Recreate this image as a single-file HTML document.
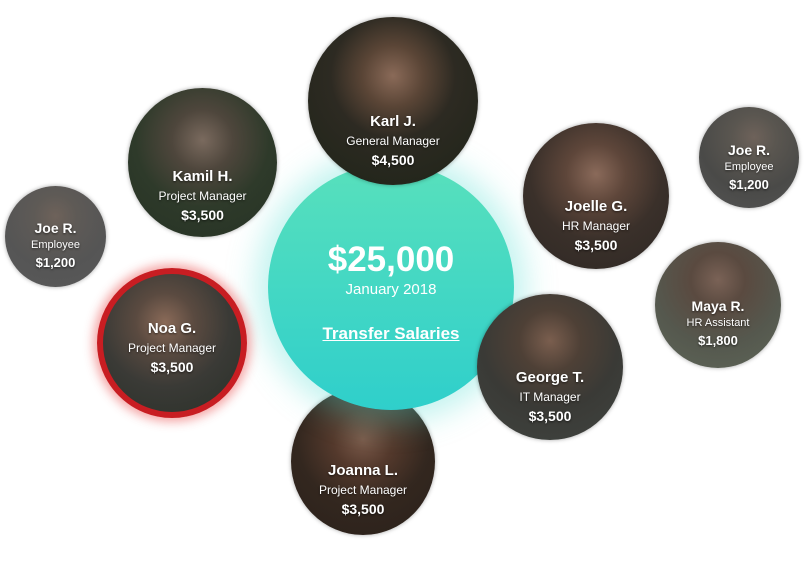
<!DOCTYPE html>
<html><head><meta charset="utf-8"><style>
body{margin:0;width:812px;height:565px;background:#fff;position:relative;overflow:hidden;font-family:"Liberation Sans",sans-serif;}
.c{position:absolute;border-radius:50%;overflow:hidden;box-shadow:0 0 4px rgba(0,0,0,.35);color:#fff;text-align:center;z-index:2;}
.c .t{position:absolute;left:0;right:0;line-height:1;text-shadow:0 1px 2px rgba(0,0,0,.6);}
.n{font-weight:bold;font-size:15px;}
.r{font-size:12px;margin-top:6px;}
.a{font-weight:bold;font-size:14px;margin-top:6px;}
#center{position:absolute;z-index:1;left:268px;top:164px;width:246px;height:246px;border-radius:50%;background:linear-gradient(180deg,#58e0bc,#2fcfcb);box-shadow:0 0 30px 12px rgba(80,220,210,.35);color:#fff;text-align:center;}
</style></head><body>

<div id="center">
<div style="position:absolute;left:0;right:0;top:76px;font-size:35px;font-weight:bold;">$25,000</div>
<div style="position:absolute;left:0;right:0;top:117px;font-size:15px;">January 2018</div>
<div style="position:absolute;left:0;right:0;top:160px;font-size:17px;font-weight:bold;text-decoration:underline;">Transfer Salaries</div>
</div>

<!-- Karl -->
<div class="c" style="left:308px;top:17px;width:170px;height:168px;background:radial-gradient(circle at 50% 35%,#8a6a58 0,#5a4536 22%,#2d2a22 45%,#1e2418 100%);">
<div class="t" style="top:97px"><div class="n">Karl J.</div><div class="r">General Manager</div><div class="a">$4,500</div></div></div>

<!-- Kamil -->
<div class="c" style="left:128px;top:88px;width:149px;height:149px;background:radial-gradient(circle at 50% 35%,#7a6a5e 0,#4e463c 25%,#2e3a2a 55%,#263224 100%);">
<div class="t" style="top:81px"><div class="n">Kamil H.</div><div class="r">Project Manager</div><div class="a">$3,500</div></div></div>

<!-- Joe left -->
<div class="c" style="left:5px;top:186px;width:101px;height:101px;background:radial-gradient(circle at 50% 30%,#6e625a 0,#5e5a56 25%,#555 60%,#5a5a5a 100%);">
<div class="t" style="top:35px"><div class="n" style="font-size:14px">Joe R.</div><div class="r" style="font-size:11px;margin-top:5px">Employee</div><div class="a" style="font-size:13px;margin-top:5px">$1,200</div></div></div>

<!-- Noa -->
<div class="c" style="left:97px;top:268px;width:150px;height:150px;box-sizing:border-box;border:6px solid #c81d22;box-shadow:0 0 10px 4px rgba(230,60,60,.45);background:radial-gradient(circle at 45% 35%,#8a6a58 0,#5a4a40 25%,#3a3a36 55%,#2a3028 100%);">
<div class="t" style="top:47px"><div class="n">Noa G.</div><div class="r">Project Manager</div><div class="a">$3,500</div></div></div>

<!-- Joanna -->
<div class="c" style="z-index:0;left:291px;top:388px;width:144px;height:147px;background:radial-gradient(circle at 50% 35%,#7a5a4a 0,#54392c 25%,#33271f 55%,#2a201a 100%);">
<div class="t" style="top:75px"><div class="n">Joanna L.</div><div class="r">Project Manager</div><div class="a">$3,500</div></div></div>

<!-- George -->
<div class="c" style="left:477px;top:294px;width:146px;height:146px;background:radial-gradient(circle at 50% 32%,#7a5e4e 0,#4e4036 25%,#3a3a36 55%,#404440 100%);">
<div class="t" style="top:76px"><div class="n">George T.</div><div class="r">IT Manager</div><div class="a">$3,500</div></div></div>

<!-- Joelle -->
<div class="c" style="left:523px;top:123px;width:146px;height:146px;background:radial-gradient(circle at 50% 35%,#8a6a5a 0,#5e463a 25%,#3a302a 55%,#2e2824 100%);">
<div class="t" style="top:76px"><div class="n">Joelle G.</div><div class="r">HR Manager</div><div class="a">$3,500</div></div></div>

<!-- Joe right -->
<div class="c" style="left:699px;top:107px;width:100px;height:101px;background:radial-gradient(circle at 55% 30%,#6e625a 0,#5a5650 25%,#4a4a48 60%,#555 100%);">
<div class="t" style="top:36px"><div class="n" style="font-size:14px">Joe R.</div><div class="r" style="font-size:11px;margin-top:5px">Employee</div><div class="a" style="font-size:13px;margin-top:5px">$1,200</div></div></div>

<!-- Maya -->
<div class="c" style="left:655px;top:242px;width:126px;height:126px;background:radial-gradient(circle at 50% 30%,#7a6256 0,#5a4a40 25%,#55584e 60%,#5e6658 100%);">
<div class="t" style="top:57px"><div class="n" style="font-size:14px">Maya R.</div><div class="r" style="font-size:11px;margin-top:5px">HR Assistant</div><div class="a" style="font-size:13px;margin-top:5px">$1,800</div></div></div>

</body></html>
